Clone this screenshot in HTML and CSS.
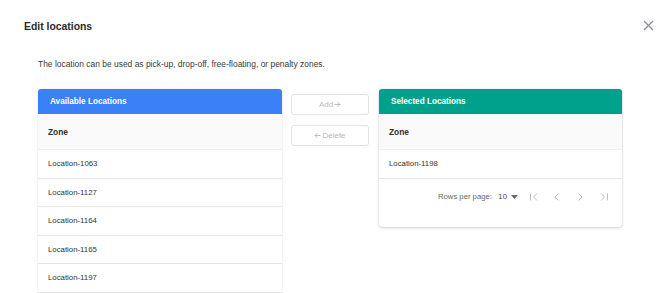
FILE: index.html
```html
<!DOCTYPE html>
<html>
<head>
<meta charset="utf-8">
<link rel="stylesheet" href="styles.css">
</head>
<body>
<div class="dialog">
  <div class="dialog-header">
    <h1 class="title">Edit locations</h1>
    <button class="close" aria-label="close">
      <svg width="11" height="11" viewBox="0 0 11 11"><path d="M1 1L10 10M10 1L1 10" stroke="#8a8e99" stroke-width="1.3" fill="none"/></svg>
    </button>
  </div>
  <div class="content">
    <p class="desc">The location can be used as pick-up, drop-off, free-floating, or penalty zones.</p>
    <div class="columns">
      <div class="panel">
        <div class="panel-head blue">Available Locations</div>
        <div class="zone-row">Zone</div>
        <div class="row">Location-1063</div>
        <div class="row">Location-1127</div>
        <div class="row">Location-1164</div>
        <div class="row">Location-1165</div>
        <div class="row">Location-1197</div>
      </div>
      <div class="actions">
        <button class="btn">Add<svg class="arrow" width="7" height="7" viewBox="0 0 7 7"><path d="M0.5 3.5H6M3.5 1L6 3.5L3.5 6" stroke="#b8b8b8" stroke-width="0.9" fill="none"/></svg></button>
        <button class="btn"><svg class="arrow" width="7" height="7" viewBox="0 0 7 7"><path d="M6.5 3.5H1M3.5 1L1 3.5L3.5 6" stroke="#b8b8b8" stroke-width="0.9" fill="none"/></svg>Delete</button>
      </div>
      <div class="panel right">
        <div class="panel-head green">Selected Locations</div>
        <div class="zone-row">Zone</div>
        <div class="row">Location-1198</div>
        <div class="pagination">
          <span class="rpp">Rows per page:</span>
          <span class="select">10 <svg width="7" height="4" viewBox="0 0 7 4"><path d="M0 0H7L3.5 4Z" fill="#666"/></svg></span>
          <span class="pg">
            <svg width="10" height="10" viewBox="0 0 10 10"><path d="M1.5 1.5V8.5M8 1.5L4.5 5L8 8.5" stroke="#bdbdbd" stroke-width="1" fill="none"/></svg>
          </span>
          <span class="pg">
            <svg width="10" height="10" viewBox="0 0 10 10"><path d="M6.5 1.5L3 5L6.5 8.5" stroke="#bdbdbd" stroke-width="1" fill="none"/></svg>
          </span>
          <span class="pg">
            <svg width="10" height="10" viewBox="0 0 10 10"><path d="M3.5 1.5L7 5L3.5 8.5" stroke="#bdbdbd" stroke-width="1" fill="none"/></svg>
          </span>
          <span class="pg">
            <svg width="10" height="10" viewBox="0 0 10 10"><path d="M2 1.5L5.5 5L2 8.5M8.5 1.5V8.5" stroke="#bdbdbd" stroke-width="1" fill="none"/></svg>
          </span>
        </div>
      </div>
    </div>
  </div>
</div>
</body>
</html>
```

FILE: styles.css
```css
html, body {
  margin: 0;
  padding: 0;
  background: #ffffff;
  font-family: "Liberation Sans", Arial, Helvetica, sans-serif;
  color: #333;
  overflow: hidden;
}

.dialog {
  width: 670px;
  height: 293px;
  padding: 15px 0 0 24px;
  box-sizing: border-box;
}

.dialog-header {
  display: flex;
  justify-content: space-between;
  align-items: center;
  height: 22px;
  padding-right: 16px;
}

.title {
  margin: 0;
  font-size: 10.4px;
  font-weight: 700;
  color: #2b2b2b;
}

.close {
  border: 0;
  background: none;
  padding: 0;
  width: 11px;
  height: 11px;
  display: flex;
  margin-top: -2px;
}

.content {
  padding-left: 14px;
}

.desc {
  margin: 0;
  margin-top: 20px;
  height: 14px;
  line-height: 14px;
  font-size: 8.45px;
  color: #3a3a3a;
}

.columns {
  display: flex;
  align-items: flex-start;
  margin-top: 18px;
}

.panel {
  width: 244px;
  background: #fff;
  border-radius: 3px 3px 0 0;
  box-shadow: 0 0 2px rgba(0,0,0,0.12), 0 1px 2px rgba(0,0,0,0.08);
}

.panel.right {
  width: 243px;
  border-radius: 3px;
  box-shadow: 0 0 2px rgba(0,0,0,0.12), 0 1px 3px rgba(0,0,0,0.16);
}

.panel-head {
  height: 25px;
  line-height: 25px;
  padding-left: 12px;
  color: #fff;
  font-size: 8.2px;
  font-weight: 700;
  border-radius: 3px 3px 0 0;
}

.blue { background: #3b80f7; }
.green { background: #00a18c; }

.zone-row {
  height: 36px;
  line-height: 37px;
  padding-left: 10px;
  background: #fafafa;
  font-size: 8.4px;
  font-weight: 700;
  color: #2e2e2e;
  border-bottom: 1px solid #eeeeee;
  box-sizing: border-box;
}

.row {
  height: 28.5px;
  line-height: 28px;
  padding-left: 10px;
  font-size: 7.8px;
  color: #333;
  border-bottom: 1px solid #e6e6e6;
  box-sizing: border-box;
}

.actions {
  width: 78px;
  margin: 5px 10px 0 9px;
  display: flex;
  flex-direction: column;
  gap: 10px;
}

.btn {
  height: 21px;
  border: 1px solid #e2e2e2;
  border-radius: 3px;
  background: #fff;
  color: #b8b8b8;
  font-family: "Liberation Sans", Arial, sans-serif;
  font-size: 8px;
  padding: 0;
  display: flex;
  align-items: center;
  justify-content: center;
  gap: 1px;
}

.arrow {
  display: block;
}

.pagination {
  display: flex;
  align-items: center;
  height: 36px;
  padding-left: 59px;
  margin-bottom: 12px;
  font-size: 7.7px;
  color: #666;
}

.rpp {
  width: 62px;
}

.select {
  display: flex;
  align-items: center;
  gap: 4px;
  width: 31px;
  color: #444;
}

.pg {
  display: flex;
  width: 24px;
}
```
